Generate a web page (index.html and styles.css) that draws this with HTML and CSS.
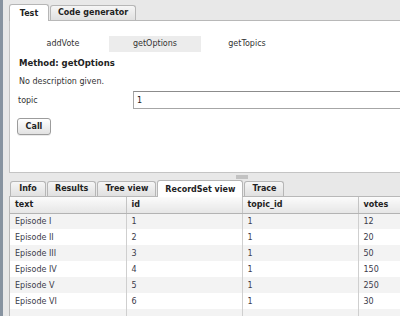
FILE: index.html
```html
<!DOCTYPE html>
<html lang="en">
<head>
    <meta charset="UTF-8">
    <title>Service browser</title>
    <link rel="stylesheet" href="styles.css">
</head>
<body>
<div class="app">
    <div class="sidebar"></div>
    <div class="main">
        <div class="tabs">
            <div class="tab active">Test</div>
            <div class="tab">Code generator</div>
        </div>
        <div class="panel">
            <div class="methods">
                <div class="method">addVote</div>
                <div class="method selected">getOptions</div>
                <div class="method">getTopics</div>
            </div>
            <div class="title">Method: getOptions</div>
            <div class="desc">No description given.</div>
            <div class="param">
                <label class="param-label">topic</label>
                <input class="param-input" type="text" value="1">
            </div>
            <button class="call">Call</button>
        </div>
        <div class="splitter"><div class="handle"></div></div>
        <div class="tabs bottom">
            <div class="tab">Info</div>
            <div class="tab">Results</div>
            <div class="tab">Tree view</div>
            <div class="tab active">RecordSet view</div>
            <div class="tab">Trace</div>
        </div>
        <div class="results">
            <table class="grid">
                <thead>
                    <tr><th>text</th><th>id</th><th>topic_id</th><th>votes</th></tr>
                </thead>
                <tbody>
                    <tr><td>Episode I</td><td>1</td><td>1</td><td>12</td></tr>
                    <tr><td>Episode II</td><td>2</td><td>1</td><td>20</td></tr>
                    <tr><td>Episode III</td><td>3</td><td>1</td><td>50</td></tr>
                    <tr><td>Episode IV</td><td>4</td><td>1</td><td>150</td></tr>
                    <tr><td>Episode V</td><td>5</td><td>1</td><td>250</td></tr>
                    <tr><td>Episode VI</td><td>6</td><td>1</td><td>30</td></tr>
                    <tr><td></td><td></td><td></td><td></td></tr>
                </tbody>
            </table>
        </div>
    </div>
</div>
</body>
</html>
```

FILE: styles.css
```css
body {
    margin: 0;
    overflow: hidden;
    background: #e8e8e8;
    font-family: "DejaVu Sans", Verdana, sans-serif;
    font-size: 8px;
    color: #333;
}

.app {
    display: flex;
    height: 316px;
}

.sidebar {
    width: 3px;
    background: #8793a0;
    flex-shrink: 0;
}

.main {
    width: 520px;
    flex-shrink: 0;
    padding-left: 6px;
}

.tabs {
    display: flex;
    align-items: flex-end;
    gap: 1px;
    height: 16px;
    padding-top: 4px;
    position: relative;
    z-index: 1;
}

.tab {
    min-width: 20px;
    height: 14px;
    line-height: 14px;
    padding: 0 7px;
    text-align: center;
    border: 1px solid #b6b6b6;
    border-bottom: none;
    border-radius: 3px 3px 0 0;
    background: linear-gradient(#f6f6f6, #e0e0e0);
    font-weight: bold;
    color: #222;
}

.tab.active {
    height: 16px;
    line-height: 17px;
    padding: 0 9px;
    background: #fff;
    margin-bottom: -1px;
}

.panel {
    background: #fff;
    border-top: 1px solid #b8b8b8;
    border-left: 1px solid #c4c4c4;
    border-bottom: 1px solid #c4c4c4;
    height: 153px;
    padding-left: 7px;
    box-sizing: border-box;
}

.methods {
    display: flex;
    margin-top: 15px;
    height: 16px;
}

.method {
    width: 92px;
    line-height: 16px;
    text-align: center;
    color: #333;
}

.method.selected {
    background: #ececec;
}

.title {
    font-weight: bold;
    font-size: 8.5px;
    margin-top: 5px;
    line-height: 12px;
    padding-left: 2px;
    color: #222;
}

.desc {
    margin-top: 7px;
    line-height: 12px;
    padding-left: 2px;
}

.param {
    display: flex;
    align-items: center;
    margin-top: 3px;
    height: 18px;
}

.param-label {
    width: 115px;
    padding-left: 1px;
}

.param-input {
    width: 300px;
    height: 18px;
    box-sizing: border-box;
    border: 1px solid #a6a6a6;
    border-top-color: #8c8c8c;
    padding: 0 3px;
    font: inherit;
    color: #222;
    margin: 0;
}

.call {
    display: block;
    margin-top: 9px;
    width: 34px;
    height: 17px;
    padding: 0;
    border: 1px solid #9c9c9c;
    border-radius: 3px;
    background: linear-gradient(#ffffff, #e2e2e2);
    font: inherit;
    font-weight: bold;
    color: #222;
    box-shadow: 0 1px 0 rgba(0, 0, 0, 0.08);
}

.splitter {
    height: 8px;
    display: flex;
    padding-left: 227px;
    box-sizing: border-box;
    padding-top: 2px;
}

.handle {
    width: 12px;
    height: 4px;
    background: #c2c2c2;
}

.tabs.bottom {
    padding-top: 0;
    height: 15px;
    padding-left: 1px;
}

.tabs.bottom .tab.active {
    padding: 0 7px;
}

.results {
    background: #fff;
    border-left: 1px solid #b8b8b8;
    border-top: 1px solid #b8b8b8;
}

.grid {
    border-collapse: collapse;
    table-layout: fixed;
}

.grid th,
.grid td {
    width: 116px;
    height: 16px;
    padding: 0 0 0 5px;
    text-align: left;
    border-right: 1px solid #cfcfcf;
    box-sizing: border-box;
    white-space: nowrap;
}

.grid th {
    background: linear-gradient(#fbfbfb, #e6e6e6);
    border-bottom: 1px solid #b3b3b3;
    border-right-color: #c4c4c4;
    font-weight: bold;
    color: #222;
}

.grid td {
    color: #3b3b4a;
}

.grid tbody tr:nth-child(odd) {
    background: #f3f3f3;
}
```
